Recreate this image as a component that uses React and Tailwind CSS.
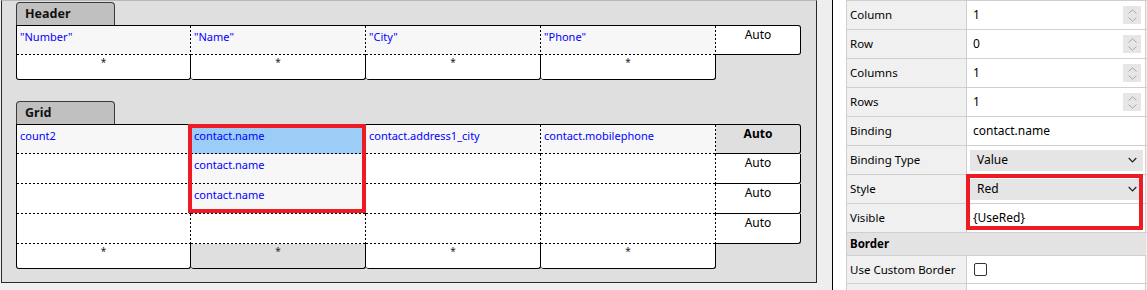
import React from "react";

const DOT_RB =
  "bg-[repeating-linear-gradient(90deg,#000_0_2px,transparent_2px_4px),repeating-linear-gradient(180deg,#000_0_2px,transparent_2px_4px)] bg-[length:100%_1px,1px_100%] bg-[position:left_bottom,right_top] bg-no-repeat";

function DataCell({ text, bg = "bg-white", first = false, top = false }) {
  return (
    <div
      className={`w-[175px] h-full ${bg} ${DOT_RB} ${first ? "border-l border-black" : ""} ${
        top ? "border-t border-black" : ""
      } pl-[3px] pt-[3px] text-[11px] leading-[16px] text-[#0000ff] whitespace-nowrap`}
    >
      {text}
    </div>
  );
}

function StarCell({ bg = "bg-white", first = false }) {
  return (
    <div
      className={`w-[175px] h-full ${bg} border-r border-b border-black rounded-b-[3px] ${
        first ? "border-l" : ""
      } flex justify-center pt-[1px] text-[10px] leading-[12px] text-[#222]`}
    >
      *
    </div>
  );
}

function AutoCell({ top = false, bold = false, bg = "bg-white" }) {
  return (
    <div
      className={`w-[85px] h-full ${bg} border-r border-b border-black ${
        top ? "border-t rounded-tr-[3px]" : ""
      } rounded-br-[3px] flex justify-center pt-[1px] text-[12px] leading-[16px] text-black ${
        bold ? "font-bold" : ""
      }`}
    >
      Auto
    </div>
  );
}

function Tab({ label }) {
  return (
    <div className="w-[99px] h-[23px] bg-[#c0c0c0] border-t border-l border-r border-[#3a3a3a] rounded-t-[4px] flex items-center pl-[8px] pt-[1px] text-[12.5px] font-bold text-[#111]">
      {label}
    </div>
  );
}

function PropRow({ label, children, h = "h-[29px]" }) {
  return (
    <div className={`flex shrink-0 ${h} border-b border-[#cfcfcf]`}>
      <div className="w-[121px] h-full bg-[#f0f0f0] border-l border-r border-[#cfcfcf] flex items-center pl-[3px] text-[11.5px] text-black whitespace-nowrap">
        {label}
      </div>
      <div className="w-[179px] h-full bg-white border-r border-[#cfcfcf] flex items-center">
        {children}
      </div>
    </div>
  );
}

function Spinner() {
  return (
    <div className="w-[18px] h-[18px] bg-[#e6e6e6] flex flex-col items-center justify-center gap-[3px] mr-[4px]">
      <svg width="9" height="5" viewBox="0 0 9 5">
        <path d="M0.5 4.5 L4.5 0.8 L8.5 4.5" fill="none" stroke="#a8a8a8" strokeWidth="1" />
      </svg>
      <svg width="9" height="5" viewBox="0 0 9 5">
        <path d="M0.5 0.5 L4.5 4.2 L8.5 0.5" fill="none" stroke="#a8a8a8" strokeWidth="1" />
      </svg>
    </div>
  );
}

function NumValue({ v }) {
  return (
    <div className="flex-1 flex items-center justify-between pl-[6px]">
      <span className="text-[12px] text-black">{v}</span>
      <Spinner />
    </div>
  );
}

function Dropdown({ v }) {
  return (
    <div className="flex-1 ml-[3px] mr-[2px] h-[21px] bg-[#e5e5e5] flex items-center justify-between pl-[7px] pr-[6px]">
      <span className="text-[12px] text-black">{v}</span>
      <svg width="9" height="6" viewBox="0 0 9 6">
        <path d="M0.7 1 L4.5 4.8 L8.3 1" fill="none" stroke="#222" strokeWidth="1.2" />
      </svg>
    </div>
  );
}

export default function App() {
  return (
    <div className="w-[1147px] h-[290px] overflow-hidden flex bg-[#f0f0f0] font-['Noto_Sans',sans-serif]">
      {/* Designer canvas */}
      <div className="w-[817px] shrink-0 flex flex-col">
        <div className="ml-px w-[816px] h-[283px] shrink-0 bg-[#dfdfdf] border-t border-t-[#b8b8b8] border-l border-r border-b border-[#2a2a2a] pl-[14px] pt-px">
          {/* Header section */}
          <Tab label="Header" />
          <div className="flex flex-col">
            <div className="flex h-[30px]">
              <DataCell text={'"Number"'} bg="bg-[#f7f7f7]" first top />
              <DataCell text={'"Name"'} bg="bg-[#f7f7f7]" top />
              <DataCell text={'"City"'} bg="bg-[#f7f7f7]" top />
              <DataCell text={'"Phone"'} bg="bg-[#f7f7f7]" top />
              <AutoCell top />
            </div>
            <div className="flex h-[25px]">
              <StarCell first />
              <StarCell />
              <StarCell />
              <StarCell />
            </div>
          </div>

          {/* Grid section */}
          <div className="mt-[21px]">
            <Tab label="Grid" />
            <div className="relative flex flex-col">
              <div className="flex h-[30px]">
                <DataCell text="count2" bg="bg-[#f7f7f7]" first top />
                <DataCell text="contact.name" bg="bg-[#9bcdf6]" top />
                <DataCell text="contact.address1_city" bg="bg-[#f7f7f7]" top />
                <DataCell text="contact.mobilephone" bg="bg-[#f7f7f7]" top />
                <AutoCell top bold bg="bg-[#dfdfdf]" />
              </div>
              <div className="flex h-[30px]">
                <DataCell first />
                <DataCell text="contact.name" bg="bg-[#f7f7f7]" />
                <DataCell />
                <DataCell />
                <AutoCell />
              </div>
              <div className="flex h-[30px]">
                <DataCell first />
                <DataCell text="contact.name" bg="bg-[#f7f7f7]" />
                <DataCell />
                <DataCell />
                <AutoCell />
              </div>
              <div className="flex h-[30px]">
                <DataCell first />
                <DataCell />
                <DataCell />
                <DataCell />
                <AutoCell />
              </div>
              <div className="flex h-[25px]">
                <StarCell first />
                <StarCell bg="bg-[#dfdfdf]" />
                <StarCell />
                <StarCell />
              </div>
              <div className="absolute left-[172px] top-0 w-[178px] h-[89px] border-4 border-[#ed1c24]" />
            </div>
          </div>
        </div>
      </div>

      {/* splitter */}
      <div className="w-[15px] shrink-0 bg-[#eeeeee]" />
      <div className="w-px shrink-0 bg-black" />
      <div className="w-[13px] shrink-0 bg-white" />

      {/* Property grid */}
      <div className="w-[301px] shrink-0 flex flex-col border-t border-[#cfcfcf]">
        <PropRow label="Column">
          <NumValue v="1" />
        </PropRow>
        <PropRow label="Row">
          <NumValue v="0" />
        </PropRow>
        <PropRow label="Columns">
          <NumValue v="1" />
        </PropRow>
        <PropRow label="Rows">
          <NumValue v="1" />
        </PropRow>
        <PropRow label="Binding">
          <span className="pl-[6px] text-[12px] text-black">contact.name</span>
        </PropRow>
        <PropRow label="Binding Type">
          <Dropdown v="Value" />
        </PropRow>
        <div className="relative shrink-0">
          <PropRow label="Style">
            <Dropdown v="Red" />
          </PropRow>
          <PropRow label="Visible">
            <span className="pl-[6px] text-[12px] text-black">{"{UseRed}"}</span>
          </PropRow>
          <div className="absolute left-[120px] top-[-1px] w-[177px] h-[56px] border-4 border-[#ed1c24]" />
        </div>
        <div className="flex shrink-0 h-[23px] border-b border-[#cfcfcf] bg-[#e3e3e3] border-l w-[300px] items-center pl-[3px] text-[11.5px] font-bold text-black">
          Border
        </div>
        <PropRow label="Use Custom Border" h="h-[28px]">
          <div className="ml-[7px] w-[13px] h-[13px] border border-[#333] rounded-[2px] bg-white" />
        </PropRow>
        <PropRow label="" h="h-[10px]" />
      </div>
    </div>
  );
}
